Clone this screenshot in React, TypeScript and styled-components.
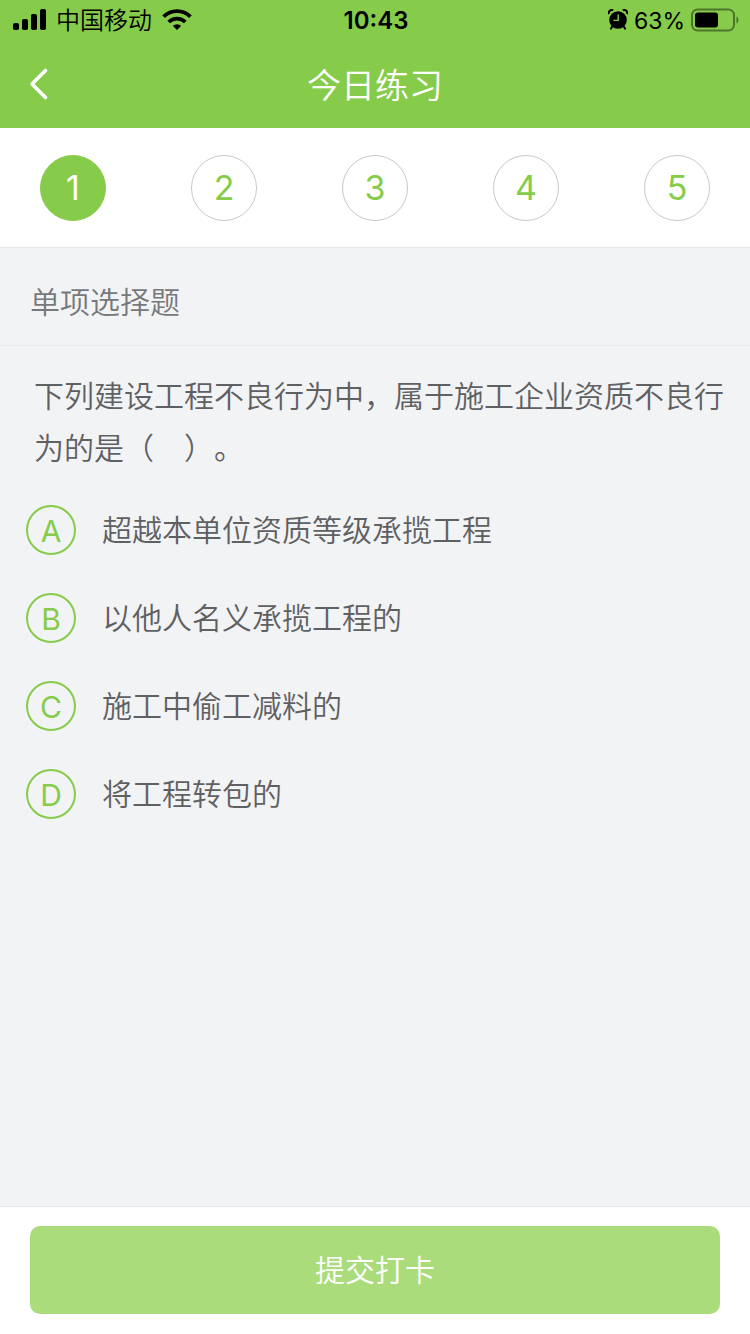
import React, { useState } from "react";
import styled, { createGlobalStyle } from "styled-components";

const GREEN = "#86cc4a";

const GlobalStyle = createGlobalStyle`
  *, *::before, *::after { box-sizing: border-box; }
  body {
    margin: 0;
    background: #f2f3f5;
    font-family: Inter, "Noto Sans CJK SC DemiLight", "Noto Sans CJK SC", sans-serif;
    font-weight: 400;
    text-spacing-trim: space-all;
  }
  button, input, fieldset { font: inherit; margin: 0; padding: 0; border: 0; }
  h1, h2, p { margin: 0; font-weight: inherit; }
`;

const Page = styled.div`
  display: flex;
  flex-direction: column;
  min-height: 100vh;
`;

const Header = styled.header`
  background: ${GREEN};
`;

const StatusBar = styled.div`
  display: grid;
  grid-template-columns: 1fr auto 1fr;
  align-items: center;
  height: 40px;
  padding: 0 11px 0 13px;
  color: #000;
  font-size: 24px;
  line-height: 36px;
`;

const StatusGroup = styled.div<{ $end?: boolean; $gap: number }>`
  display: flex;
  align-items: center;
  justify-content: ${(p) => (p.$end ? "flex-end" : "flex-start")};
  gap: ${(p) => p.$gap}px;
`;

const StatusText = styled.span`
  padding-top: 2px;
`;

const Percent = styled(StatusText)`
  font-size: 23px;
`;

const Clock = styled.time`
  padding-top: 2px;
  font-weight: 600;
`;

const NavBar = styled.div`
  display: grid;
  grid-template-columns: 80px 1fr 80px;
  align-items: center;
  height: 88px;
`;

const BackButton = styled.button`
  display: flex;
  align-items: center;
  height: 88px;
  padding-left: 28px;
  background: none;
  cursor: pointer;
`;

const Title = styled.h1`
  padding-top: 4px;
  color: #fff;
  font-size: 34px;
  line-height: 48px;
  text-align: center;
`;

const Steps = styled.nav`
  display: flex;
  align-items: center;
  justify-content: space-between;
  height: 120px;
  padding: 0 40px;
  background: #fff;
  border-bottom: 1px solid #e6e7e9;
`;

const StepButton = styled.button<{ $active: boolean }>`
  width: 66px;
  height: 66px;
  border: 1px solid ${(p) => (p.$active ? GREEN : "#c8c9cc")};
  border-radius: 50%;
  background: ${(p) => (p.$active ? GREEN : "#fff")};
  color: ${(p) => (p.$active ? "#fff" : GREEN)};
  font-size: 34px;
  line-height: 64px;
  text-align: center;
  cursor: pointer;
`;

const SectionTitle = styled.h2`
  padding: 32px 30px 21px;
  border-bottom: 1px solid #e8e9ec;
  color: #77787a;
  font-size: 30px;
  line-height: 44px;
`;

const Main = styled.main`
  flex: 1;
`;

const Question = styled.p`
  padding: 24px 24px 12px 34px;
  color: #5f6062;
  font-size: 30px;
  line-height: 52px;
`;

const Options = styled.fieldset`
  display: flex;
  flex-direction: column;
  min-width: 0;
`;

const Option = styled.label`
  display: grid;
  grid-template-columns: 50px 1fr;
  align-items: center;
  column-gap: 26px;
  min-height: 88px;
  padding: 0 26px;
  color: #5f6062;
  font-size: 30px;
  line-height: 44px;
  cursor: pointer;
`;

const OptionRadio = styled.input`
  grid-area: 1 / 1;
  appearance: none;
  width: 50px;
  height: 50px;
  border: 2px solid ${GREEN};
  border-radius: 50%;
  cursor: pointer;

  &:checked { background: ${GREEN}; }
  &:checked + span { color: #fff; }
`;

const OptionLetter = styled.span`
  grid-area: 1 / 1;
  z-index: 1;
  padding-top: 2px;
  color: ${GREEN};
  text-align: center;
`;

const OptionText = styled.span`
  grid-area: 1 / 2;
`;

const Footer = styled.footer`
  padding: 19px 30px 20px;
  background: #fff;
  border-top: 1px solid #e6e7e9;
`;

const SubmitButton = styled.button`
  display: block;
  width: 100%;
  height: 88px;
  border-radius: 10px;
  background: #aadc7b;
  color: #fff;
  font-size: 30px;
  line-height: 88px;
  text-align: center;
  cursor: pointer;
`;

const SignalIcon = () => (
  <svg width="33" height="22" viewBox="0 0 33 22" aria-hidden="true">
    <rect x="0" y="14" width="6" height="7" rx="1.8" />
    <rect x="9" y="10" width="6" height="11" rx="1.8" />
    <rect x="18" y="5" width="6" height="16" rx="1.8" />
    <rect x="27" y="0" width="6" height="21" rx="1.8" />
  </svg>
);

const WifiIcon = () => (
  <svg width="30" height="22" viewBox="0 0 30 22" aria-hidden="true">
    <g fill="none" stroke="#000" strokeWidth="3.8">
      <path d="M1.6 7.6A19 19 0 0 1 28.4 7.6" />
      <path d="M6.7 13A11.8 11.8 0 0 1 23.3 13" />
    </g>
    <path d="M10.8 16.8A6.4 6.4 0 0 1 19.2 16.8L15.6 20.5Q15 21.1 14.4 20.5Z" />
  </svg>
);

const AlarmIcon = () => (
  <svg width="20" height="22" viewBox="0 0 20 22" aria-hidden="true">
    <circle cx="10" cy="11" r="8.8" />
    <path d="M1 5.2A3 3 0 0 1 5.2 1.4" fill="none" stroke="#000" strokeWidth="2" />
    <path d="M19 5.2A3 3 0 0 0 14.8 1.4" fill="none" stroke="#000" strokeWidth="2" />
    <path d="M4.2 17.4L3 19.6M15.8 17.4L17 19.6" stroke="#000" strokeWidth="2" strokeLinecap="round" />
    <path d="M10.2 5.4V11.4H5.4" fill="none" stroke={GREEN} strokeWidth="1.4" />
  </svg>
);

const BatteryIcon = () => (
  <svg width="48" height="24" viewBox="0 0 48 24" aria-hidden="true">
    <rect x="1" y="1.5" width="42" height="21" rx="5.5" fill="none" stroke="#000" strokeOpacity="0.42" strokeWidth="2" />
    <rect x="4" y="4.5" width="23" height="15" rx="3" />
    <path d="M45.5 8.5C48 9.5 48 14.5 45.5 15.5Z" fillOpacity="0.45" />
  </svg>
);

const BackIcon = () => (
  <svg width="22" height="34" viewBox="0 0 22 34" fill="none" stroke="#fff" strokeWidth="3.6" strokeLinecap="round" strokeLinejoin="round" aria-hidden="true">
    <path d="M17.5 3.5L4 17L17.5 30.5" />
  </svg>
);

const steps = [1, 2, 3, 4, 5];

const options = [
  { letter: "A", text: "超越本单位资质等级承揽工程" },
  { letter: "B", text: "以他人名义承揽工程的" },
  { letter: "C", text: "施工中偷工减料的" },
  { letter: "D", text: "将工程转包的" },
];

export default function App() {
  const [step, setStep] = useState(1);

  return (
    <Page lang="zh-CN">
      <GlobalStyle />
      <Header>
        <StatusBar>
          <StatusGroup $gap={10}>
            <SignalIcon />
            <StatusText>中国移动</StatusText>
            <WifiIcon />
          </StatusGroup>
          <Clock>10:43</Clock>
          <StatusGroup $end $gap={6}>
            <AlarmIcon />
            <Percent>63%</Percent>
            <BatteryIcon />
          </StatusGroup>
        </StatusBar>
        <NavBar>
          <BackButton type="button" aria-label="返回">
            <BackIcon />
          </BackButton>
          <Title>今日练习</Title>
        </NavBar>
      </Header>
      <Steps>
        {steps.map((n) => (
          <StepButton key={n} type="button" $active={n === step} onClick={() => setStep(n)}>
            {n}
          </StepButton>
        ))}
      </Steps>
      <Main>
        <SectionTitle>单项选择题</SectionTitle>
        <Question id="question">下列建设工程不良行为中，属于施工企业资质不良行为的是（　）。</Question>
        <Options aria-labelledby="question">
          {options.map((o) => (
            <Option key={o.letter}>
              <OptionRadio type="radio" name="answer" value={o.letter} />
              <OptionLetter>{o.letter}</OptionLetter>
              <OptionText>{o.text}</OptionText>
            </Option>
          ))}
        </Options>
      </Main>
      <Footer>
        <SubmitButton type="button">提交打卡</SubmitButton>
      </Footer>
    </Page>
  );
}
